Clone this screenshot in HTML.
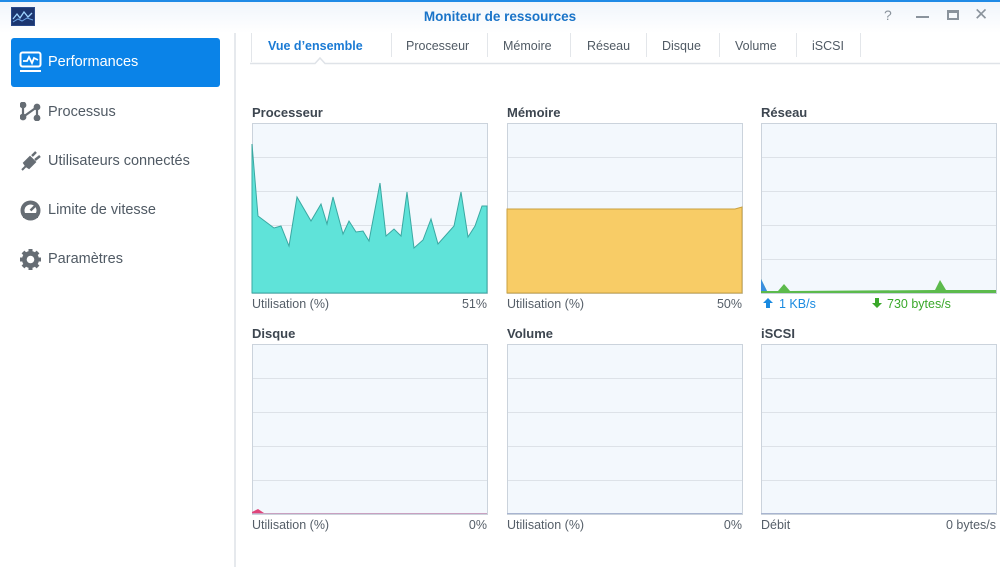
<!DOCTYPE html>
<html><head><meta charset="utf-8"><style>
*{margin:0;padding:0;box-sizing:border-box}
body{width:1000px;height:567px;overflow:hidden;background:#fff;font-family:"Liberation Sans",sans-serif;position:relative}
.t{position:absolute;white-space:nowrap}
.hdr{position:absolute;left:0;top:0;width:1000px;height:33px;background:linear-gradient(#f0f5fb,#fff);border-top:2px solid #1f8ae6}
.tab{position:absolute;top:39px;font-size:12.5px;color:#505a64}
.ttl{position:absolute;font-size:13px;font-weight:bold;color:#3d4650}
.lb{position:absolute;font-size:12.5px;color:#555e68}
</style></head><body>
<div class="hdr"></div>
<svg class="t" style="left:11px;top:7px" width="24" height="19" viewBox="0 0 24 19"><rect width="24" height="19" fill="#2b4a8a"/><rect x="1" y="1" width="22" height="17" fill="#1c3670"/><polyline points="2,12 6,7 9,11 13,5 17,10 21,6" fill="none" stroke="#9fd4ff" stroke-width="1.3"/><polyline points="2,15 7,12 11,14 16,11 22,13" fill="none" stroke="#6fa8e8" stroke-width="1"/></svg>
<div class="t" style="left:0;width:1000px;top:9px;text-align:center;font-size:13.5px;font-weight:bold;color:#1a74c8">Moniteur de ressources</div>
<div class="t" style="left:884px;top:7px;font-size:14px;color:#8a939c">?</div>
<div class="t" style="left:916px;top:16px;width:13px;height:2px;background:#8a939c"></div>
<div class="t" style="left:947px;top:10px;width:12px;height:10px;border:2px solid #8a939c;border-top-width:3px"></div>
<div class="t" style="left:974px;top:5px;font-size:17px;color:#8a939c">✕</div>

<div class="t" style="left:234px;top:33px;width:2px;height:534px;background:#e6e9ed"></div>
<div class="t" style="left:11px;top:38px;width:209px;height:49px;background:#0a83e8;border-radius:3px"></div>
<svg class="t" style="left:19px;top:51px" width="23" height="22" viewBox="0 0 23 22"><rect x="1.5" y="1.5" width="20" height="14" rx="2" fill="none" stroke="#fff" stroke-width="2"/><polyline points="4,10 8,10 10,6 13,12 15,7 19,9" fill="none" stroke="#fff" stroke-width="1.8"/><rect x="1" y="19" width="21" height="2" fill="#fff"/></svg>
<div class="t" style="left:48px;top:54px;font-size:14.5px;color:#fff">Performances</div>
<svg class="t" style="left:20px;top:102px" width="21" height="19" viewBox="0 0 21 19"><g stroke="#666d74" stroke-width="2.2" fill="#666d74"><line x1="3" y1="3" x2="3" y2="15"/><line x1="3" y1="15" x2="17" y2="5"/><line x1="17" y1="5" x2="17" y2="16"/><circle cx="3" cy="3" r="2.3"/><circle cx="3" cy="15" r="2.3"/><circle cx="17" cy="5" r="2.3"/><circle cx="17" cy="16" r="2.3"/></g></svg>
<div class="t" style="left:48px;top:104px;font-size:14.5px;color:#505a64">Processus</div>
<svg class="t" style="left:19px;top:150px" width="23" height="22" viewBox="0 0 23 22"><path d="M3 20 L7 16 L5 13 L11 7 L16 12 L10 18 L7 16" fill="#666d74" stroke="#666d74" stroke-width="2"/><line x1="13" y1="6" x2="17" y2="2" stroke="#666d74" stroke-width="2.5"/><line x1="16" y1="10" x2="21" y2="6" stroke="#666d74" stroke-width="2.5"/></svg>
<div class="t" style="left:48px;top:153px;font-size:14.5px;color:#505a64">Utilisateurs connectés</div>
<svg class="t" style="left:19px;top:199px" width="23" height="23" viewBox="0 0 23 23"><circle cx="11.5" cy="11.5" r="10" fill="#666d74"/><circle cx="11.5" cy="11.5" r="6" fill="#fff"/><path d="M11.5 11.5 L16 7" stroke="#666d74" stroke-width="2.5"/><rect x="4" y="14" width="15" height="5" fill="#666d74"/></svg>
<div class="t" style="left:48px;top:202px;font-size:14.5px;color:#505a64">Limite de vitesse</div>
<svg class="t" style="left:19px;top:248px" width="23" height="23" viewBox="0 0 23 23"><circle cx="11.5" cy="11.5" r="8.5" fill="#666d74"/><g stroke="#666d74" stroke-width="4"><line x1="11.5" y1="1" x2="11.5" y2="22"/><line x1="1" y1="11.5" x2="22" y2="11.5"/><line x1="4" y1="4" x2="19" y2="19"/><line x1="19" y1="4" x2="4" y2="19"/></g><circle cx="11.5" cy="11.5" r="3.8" fill="#fff"/></svg>
<div class="t" style="left:48px;top:251px;font-size:14.5px;color:#505a64">Paramètres</div>

<div class="tab" style="left:268px;color:#1a7ad4;font-weight:bold">Vue d’ensemble</div>
<div class="tab" style="left:406px">Processeur</div>
<div class="tab" style="left:503px">Mémoire</div>
<div class="tab" style="left:587px">Réseau</div>
<div class="tab" style="left:662px">Disque</div>
<div class="tab" style="left:735px">Volume</div>
<div class="tab" style="left:812px">iSCSI</div>

<svg class="t" style="left:0;top:0" width="1000" height="567">
<g stroke="#e3e6ea" stroke-width="1"><line x1="391.5" y1="33" x2="391.5" y2="57"/><line x1="487.5" y1="33" x2="487.5" y2="57"/><line x1="570.5" y1="33" x2="570.5" y2="57"/><line x1="646.5" y1="33" x2="646.5" y2="57"/><line x1="719.5" y1="33" x2="719.5" y2="57"/><line x1="796.5" y1="33" x2="796.5" y2="57"/><line x1="860.5" y1="33" x2="860.5" y2="57"/><line x1="251.5" y1="33" x2="251.5" y2="62"/></g>
<path d="M250 63.5 H315 L320 58 L325 63.5 H1000" fill="none" stroke="#dfe3e8" stroke-width="1.5"/>
<defs><g id="bx"><rect x="0.5" y="0.5" width="235" height="170" fill="#f3f8fd" stroke="#cbd3dc"/><g stroke="#dde2e8"><line x1="1" y1="34.5" x2="235" y2="34.5"/><line x1="1" y1="68.5" x2="235" y2="68.5"/><line x1="1" y1="102.5" x2="235" y2="102.5"/><line x1="1" y1="136.5" x2="235" y2="136.5"/></g></g></defs>
<use href="#bx" x="252" y="123"/><use href="#bx" x="507" y="123"/><use href="#bx" x="761" y="123"/>
<use href="#bx" x="252" y="344"/><use href="#bx" x="507" y="344"/><use href="#bx" x="761" y="344"/>
<polygon points="252,144 258,216 274,228 281,226 289,246 297,197 311,221 321,204 327,224 333,197 343,234 349,221 356,232 363,231 369,241 380,183 386,236 394,229 401,236 407,192 414,248 423,240 431,219 438,244 454,226 461,192 468,237 475,226 482,206 487,206 487,293 252,293" fill="#5fe3d9" stroke="#3aa8a2" stroke-width="1"/>
<polygon points="507,209 735,209 742,207 742,293 507,293" fill="#f8cc66" stroke="#c9a040" stroke-width="1"/>
<polygon points="761,279 767,291 778,291 784,284 790,291 935,290 940,280 946,290 996,290 996,293 761,293" fill="#5cba4c"/>
<polygon points="761,279 767,291 761,291" fill="#3a8ee0"/>
<polygon points="252,512 258,509 264,513 487,513 487,514 252,514" fill="#e0457a"/>
<line x1="252" y1="513.5" x2="487" y2="513.5" stroke="#c9a0c0"/>
<line x1="507" y1="513.5" x2="742" y2="513.5" stroke="#a8b4d0"/>
<line x1="761" y1="513.5" x2="996" y2="513.5" stroke="#a8b4d0"/>
<path d="M768 298 L773 303 L770 303 L770 308 L766 308 L766 303 L763 303Z" fill="#1a8ae0"/>
<path d="M877 308 L882 303 L879 303 L879 298 L875 298 L875 303 L872 303Z" fill="#3aa82a"/>
</svg>
<div class="ttl" style="left:252px;top:105px">Processeur</div>
<div class="ttl" style="left:507px;top:105px">Mémoire</div>
<div class="ttl" style="left:761px;top:105px">Réseau</div>
<div class="ttl" style="left:252px;top:326px">Disque</div>
<div class="ttl" style="left:507px;top:326px">Volume</div>
<div class="ttl" style="left:761px;top:326px">iSCSI</div>
<div class="lb" style="left:252px;top:297px">Utilisation (%)</div><div class="lb" style="left:447px;width:40px;text-align:right;top:297px">51%</div>
<div class="lb" style="left:507px;top:297px">Utilisation (%)</div><div class="lb" style="left:702px;width:40px;text-align:right;top:297px">50%</div>
<div class="lb" style="left:779px;top:297px;color:#1a8ae0">1 KB/s</div>
<div class="lb" style="left:887px;top:297px;color:#3aa82a">730 bytes/s</div>
<div class="lb" style="left:252px;top:518px">Utilisation (%)</div><div class="lb" style="left:447px;width:40px;text-align:right;top:518px">0%</div>
<div class="lb" style="left:507px;top:518px">Utilisation (%)</div><div class="lb" style="left:702px;width:40px;text-align:right;top:518px">0%</div>
<div class="lb" style="left:761px;top:518px">Débit</div><div class="lb" style="left:896px;width:100px;text-align:right;top:518px">0 bytes/s</div>
</body></html>
